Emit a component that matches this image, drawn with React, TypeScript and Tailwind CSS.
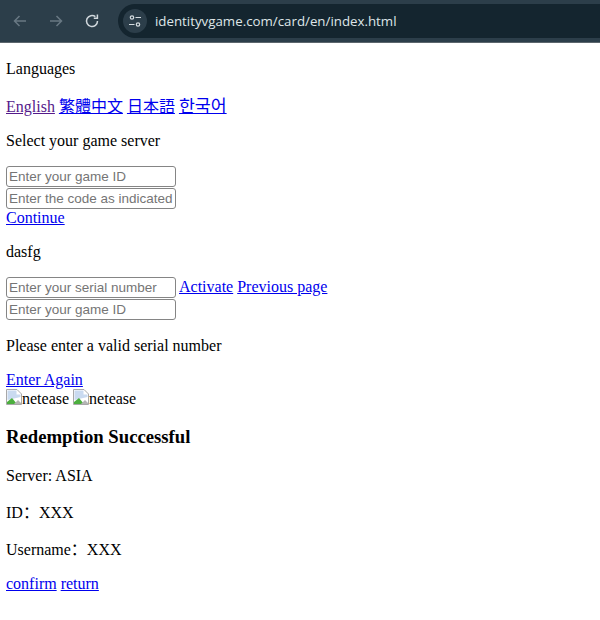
const link = 'text-[#0000ee] underline';
const field =
  'block w-[170px] h-[21px] rounded-[3px] border border-[#858585] bg-white px-[2px] py-0 text-[13.5px] leading-[15px] text-black placeholder:text-[#757575] [font-family:"Liberation_Sans",Arial,sans-serif]';

function BrokenImage() {
  return (
    <span className="flex items-start">
      <svg width="16" height="16" viewBox="0 0 16 16" className="mt-[-1px]">
        <path d="M0.5 0.5H11L15.5 5V15.5H0.5Z" fill="#fff" stroke="#a8a8a8" />
        <path d="M1.5 1.5H10.5V5.5H14.5V8L1.5 11Z" fill="#c9daf0" />
        <path d="M1 15V13L6 9L11 15Z" fill="#4caf3e" />
        <path d="M8 15L12 11L15 14V15Z" fill="#b5b5b5" />
      </svg>
      <span>netease</span>
    </span>
  );
}

function Toolbar() {
  return (
    <div className="flex h-[43px] items-center bg-[#2c3e4a] border-b border-[#5c666d]">
      <svg width="16" height="16" viewBox="0 0 16 16" fill="none" stroke="#687883" strokeWidth="1.5" className="ml-[12px]">
        <path d="M14 8H2.5M7.5 3L2.5 8L7.5 13" />
      </svg>
      <svg width="16" height="16" viewBox="0 0 16 16" fill="none" stroke="#687883" strokeWidth="1.5" className="ml-[20px]">
        <path d="M2 8H13.5M8.5 3L13.5 8L8.5 13" />
      </svg>
      <svg width="16" height="16" viewBox="0 0 16 16" fill="none" stroke="#d0d7dc" strokeWidth="1.5" className="ml-[20px]">
        <path d="M13.5 8A5.5 5.5 0 1 1 11.4 3.7" />
        <path d="M13.4 1.6V5.2H9.8" />
      </svg>
      <div className="ml-[18px] flex h-[34px] w-[482px] items-center rounded-l-full bg-[#14252f]">
        <div className="ml-[5px] flex h-[24px] w-[24px] items-center justify-center rounded-full bg-[#2c3e4a]">
          <svg width="14" height="14" viewBox="0 0 14 14" fill="none" stroke="#d5dce0" strokeWidth="1.2">
            <circle cx="4" cy="3.5" r="1.7" />
            <path d="M7.5 3.5H13M1 10.5H6.5" />
            <circle cx="10" cy="10.5" r="1.7" />
          </svg>
        </div>
        <span className="ml-[8px] text-[13.3px] text-[#dfe5e8] [font-family:'Open_Sans',sans-serif]">
          identityvgame.com/card/en/index.html
        </span>
      </div>
    </div>
  );
}

export default function App() {
  return (
    <div className="h-[620px] w-[600px] overflow-hidden bg-white text-[16px] leading-[18px] text-black [font-family:'Liberation_Serif','Noto_Sans_CJK_SC',serif]">
      <Toolbar />
      <div className="px-[6px] pt-[17px]">
        <p>Languages</p>
        <p className="mt-[18px] h-[18px]">
          <a className="text-[#551a8b] underline">English</a>{' '}
          <a className={`${link} [font-family:'Noto_Sans_CJK_TC',serif]`}>繁體中文</a>{' '}
          <a className={`${link} [font-family:'Noto_Sans_CJK_JP',serif]`}>日本語</a>{' '}
          <a className={`${link} text-[17.3px] [font-family:'Noto_Sans_CJK_KR',serif]`}>한국어</a>
        </p>
        <p className="mt-[18px]">Select your game server</p>
        <input className={`${field} mt-[16px]`} placeholder="Enter your game ID" />
        <input className={`${field} mt-px`} placeholder="Enter the code as indicated" />
        <a className={`${link} block`}>Continue</a>
        <p className="mt-[16px]">dasfg</p>
        <div className="mt-[16px] flex items-center">
          <input className={field} placeholder="Enter your serial number" />
          <a className={`${link} ml-[3px] mt-[-1px]`}>Activate</a>
          <a className={`${link} ml-[4px] mt-[-1px]`}>Previous page</a>
        </div>
        <input className={`${field} mt-px`} placeholder="Enter your game ID" />
        <p className="mt-[17px]">Please enter a valid serial number</p>
        <a className={`${link} mt-[16px] block`}>Enter Again</a>
        <div className="flex gap-[4px] pt-px pb-px">
          <BrokenImage />
          <BrokenImage />
        </div>
        <h3 className="mt-[17px] text-[18.72px] leading-[21px] font-bold">Redemption Successful</h3>
        <p className="mt-[20px]">Server: ASIA</p>
        <p className="mt-[19px]">ID：XXX</p>
        <p className="mt-[19px]">Username：XXX</p>
        <p className="mt-[16px] flex gap-[4px]">
          <a className={link}>confirm</a>
          <a className={link}>return</a>
        </p>
      </div>
    </div>
  );
}
